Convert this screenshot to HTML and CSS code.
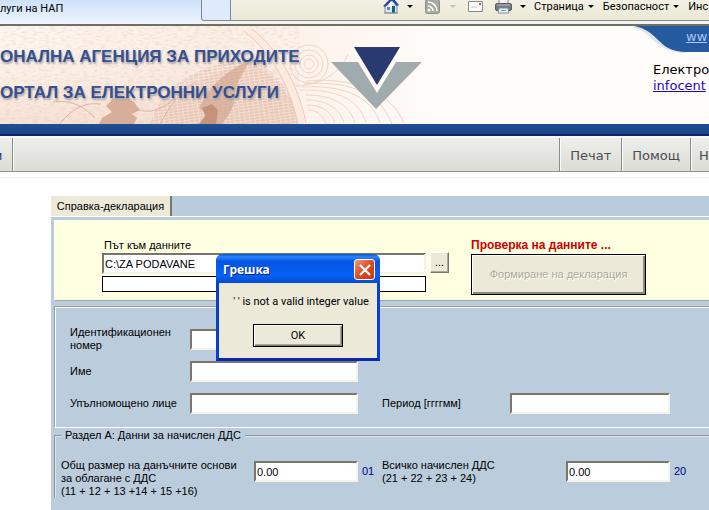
FILE: index.html
```html
<!DOCTYPE html>
<html lang="bg">
<head>
  <meta charset="utf-8">
  <title>Портал за електронни услуги на НАП</title>
  <link rel="stylesheet" href="styles.css">
</head>
<body>

<!-- Browser toolbar -->
<div class="toolbar">
  <div class="browser-tab">луги на НАП</div>
  <button class="new-tab" aria-label="Нов раздел"></button>
  <div class="commands">
    <button class="cmd cmd-home" aria-label="Начало">
      <svg width="18" height="16" viewBox="0 0 18 16">
        <path d="M3 6h12v8H3z" fill="#dbe8f5" stroke="#7c8fa8"/>
        <path d="M1 7 8 0l4 0 5 6-2 1-5-5-7 6z" fill="#2a44a8"/>
        <path d="M9 2 5 8h9z" fill="#eef5fb"/>
        <path d="M5 8h3v3H5z" fill="#6d86a8"/>
        <path d="M10 7h3v7h-3z" fill="#16647c"/>
        <path d="M2 14h14" stroke="#8a929c"/>
      </svg>
      <span class="arrow"></span>
    </button>
    <button class="cmd cmd-feed" aria-label="Емисии" disabled>
      <svg width="15" height="15" viewBox="0 0 15 15">
        <rect width="14" height="14" x=".5" y=".5" rx="2" fill="#a9a9a4" stroke="#8f8f8a"/>
        <circle cx="4" cy="11" r="1.5" fill="#fff"/>
        <path d="M3 7a5 5 0 0 1 5 5M3 3a9 9 0 0 1 9 9" fill="none" stroke="#fff" stroke-width="1.6"/>
      </svg>
      <span class="arrow arrow-off"></span>
    </button>
    <button class="cmd cmd-mail" aria-label="Поща">
      <svg width="15" height="12" viewBox="0 0 15 12">
        <path d="M.5.5h14v10H.5z" fill="#fbfbfb" stroke="#8a8a8a"/>
        <path d="M11 2h2v2h-2z" fill="#c4553c"/>
        <path d="M3 6h6" stroke="#c8c8cc"/>
      </svg>
    </button>
    <button class="cmd cmd-print" aria-label="Отпечатване">
      <svg width="17" height="15" viewBox="0 0 17 15">
        <path d="M4 0h9v5H4z" fill="#f4f4f4" stroke="#8b8b8b"/>
        <rect x=".5" y="4.5" width="16" height="7" rx="1.5" fill="#777b80" stroke="#595d62"/>
        <path d="M2 6h13" stroke="#b9bec4"/>
        <path d="M4 9h9l1 5H3z" fill="#eaf4f8" stroke="#7b8d96"/>
        <path d="M6 11.5h5" stroke="#49a8bd"/>
      </svg>
      <span class="arrow"></span>
    </button>
    <button class="cmd cmd-text">Страница <span class="arrow"></span></button>
    <button class="cmd cmd-text">Безопасност <span class="arrow"></span></button>
    <button class="cmd cmd-text">Инс</button>
  </div>
</div>

<!-- Site banner -->
<header class="banner">
  <svg class="banner-art" width="440" height="98" viewBox="0 0 440 98" aria-hidden="true">
    <defs>
      <linearGradient id="wash">
        <stop offset="0" stop-color="#fdf6f0"/>
        <stop offset=".5" stop-color="#fbeee5"/>
        <stop offset=".75" stop-color="#fdf4ee"/>
        <stop offset="1" stop-color="#fffcfa"/>
      </linearGradient>
      <linearGradient id="floor" x1="0" y1="0" x2="0" y2="1">
        <stop offset=".2" stop-color="#f3d9c8" stop-opacity="0"/>
        <stop offset="1" stop-color="#f0cfbc" stop-opacity=".5"/>
      </linearGradient>
      <pattern id="hatch" width="5" height="3" patternUnits="userSpaceOnUse" patternTransform="rotate(-8)">
        <path d="M0 1h4" stroke="#d3a48e" stroke-width=".7"/>
      </pattern>
      <filter id="grain" x="0" y="0" width="100%" height="100%">
        <feTurbulence type="fractalNoise" baseFrequency=".18 .5" numOctaves="2" seed="4"/>
        <feColorMatrix values="0 0 0 0 .75  0 0 0 0 .52  0 0 0 0 .4  1.8 0 0 0 -.8"/>
      </filter>
    </defs>
    <path d="M0 0h440v98H0z" fill="url(#wash)"/>
    <path d="M0 0h248c26 20 46 54 54 98H0z" fill="url(#floor)"/>
    <path d="M0 0h300v98H0z" filter="url(#grain)" opacity=".5"/>
    <path d="M165 98c8-28 30-46 84-62 26 14 44 34 52 62z" fill="#f2d8c9" opacity=".6"/>
    <path d="M150 98c10-36 40-56 98-68 28 14 46 38 54 68z" fill="url(#hatch)"/>
    <path d="M112 74l8-5 8 3 6 4 6 8-8 4 5 4-3 6H99l3-6 10-6-6-6z" fill="#cfa18c" opacity=".8"/>
    <path d="M250 34c-18 8-38 22-48 42l-3 6 8 6-7 10h22l6-8 6-12 2-18z" fill="#cfa08b" opacity=".6"/>
    <path d="M202 82l10-4 6 6-2 14h-17l6-8z" fill="#bb846c" opacity=".7"/>
    <path d="M60 98c10-14 24-22 40-20M135 82c12 6 24 4 40-10M160 98c12-22 22-34 36-42M95 92c-14-14-26-18-42-16M240 58c-14 8-20 22-18 40" fill="none" stroke="#ddb5a2"/>
    <path d="M248 4c26 20 46 54 54 94" fill="none" stroke="#fbeadd" stroke-width="7"/>
    <path d="M244 5c26 20 46 54 54 94M252 3c26 20 46 54 54 94" fill="none" stroke="#e9cbb9"/>
    <g fill="none" stroke="#f0d5c6">
      <circle cx="309" cy="38" r="5"/>
      <circle cx="309" cy="38" r="9"/>
      <circle cx="309" cy="38" r="14"/>
      <circle cx="309" cy="38" r="19"/>
      <path d="M296 60c24 0 46-14 52-32M300 64c30 0 56 4 66 32M302 61c36-2 68 6 78 36M305 69c26 0 44 8 50 28M306 74c20 0 34 8 38 23M307 79c14 0 24 6 28 18M308 84c8 0 14 4 18 14M304 58c42-4 76 8 88 40M306 55c48-4 84 10 98 42"/>
    </g>
  </svg>
  <div class="banner-title">
    <div>ОНАЛНА АГЕНЦИЯ ЗА ПРИХОДИТЕ</div>
    <div>ОРТАЛ ЗА ЕЛЕКТРОННИ УСЛУГИ</div>
  </div>
  <svg class="logo" width="92" height="62" viewBox="0 0 92 62" role="img" aria-label="НАП">
    <path d="M0 15h91L45 62z" fill="#9fabac"/>
    <path d="M17 0h57v15h-9L46 46 27 15z" fill="#fffaf6"/>
    <path d="M23 0h46L46 38z" fill="#283a70"/>
  </svg>
  <div class="contact">
    <div class="site-link">
      <svg class="wave" width="57" height="27" viewBox="0 0 57 27" aria-hidden="true">
        <path d="M0 1c12 1 18 7 25 14 8 7 17 12 32 12V0z" fill="#dfe3ea"/>
        <path d="M5 0c11 2 17 7 23 13 8 8 15 13 29 13V0z" fill="#265aa0"/>
      </svg>
      <a href="#">ww</a>
    </div>
    <div class="contact-text">
      Електро<br>
      <a href="#">infocent</a>
    </div>
  </div>
</header>
<div class="stripe"></div>

<nav class="menu">
  <a class="menu-first" href="#">и</a>
  <a href="#">Печат</a>
  <a href="#">Помощ</a>
  <a class="menu-last" href="#">Н</a>
</nav>

<!-- Declaration form -->
<main class="form-area">
  <div class="tabs">
    <button class="tab">Справка-декларация</button>
  </div>

  <form class="sheet">
    <section class="source">
      <div class="paths">
        <label for="path">Път към данните</label>
        <input class="field" id="path" type="text" value="C:\ZA PODAVANE">
        <input class="progress" type="text" aria-label="Файл" readonly>
      </div>
      <button class="browse" type="button">...</button>
      <div class="check">
        <strong>Проверка на данните ...</strong>
        <button class="generate" type="button" disabled>Формиране на декларация</button>
      </div>
    </section>

    <section class="person">
      <label for="ident">Идентификационен<br>номер</label>
      <input class="field" id="ident" type="text">
      <label class="col-name" for="name">Име</label>
      <input class="field" id="name" type="text">
      <label class="col-name" for="agent">Упълномощено лице</label>
      <input class="field" id="agent" type="text">
      <label class="col-period" for="period">Период [ггггмм]</label>
      <input class="field" id="period" type="text">
    </section>

    <fieldset class="section-a">
      <legend>Раздел А: Данни за начислен ДДС</legend>
      <div class="amounts">
        <label for="base">Общ размер на данъчните основи<br>за облагане с ДДС<br>(11 + 12 + 13 +14 + 15 +16)</label>
        <input class="field" id="base" type="text" value="0.00">
        <span class="cell-no">01</span>
        <label for="vat">Всичко начислен ДДС<br>(21 + 22 + 23 + 24)</label>
        <input class="field" id="vat" type="text" value="0.00">
        <span class="cell-no">20</span>
      </div>
    </fieldset>
  </form>
</main>

<!-- Error message -->
<div class="dialog" role="alertdialog" aria-labelledby="dialog-title">
  <div class="dialog-bar">
    <span id="dialog-title">Грешка</span>
    <button class="close" aria-label="Затвори">
      <svg width="12" height="12" viewBox="0 0 12 12"><path d="M1 1l10 10M11 1 1 11" stroke="#fff" stroke-width="2.2"/></svg>
    </button>
  </div>
  <div class="dialog-body">
    <p>' ' is not a valid integer value</p>
    <button class="ok">OK</button>
  </div>
</div>

</body>
</html>
```
FILE: styles.css
```css
* {
  box-sizing: border-box;
}

body {
  margin: 0;
  background: #fff;
  color: #000;
  font-family: "Liberation Sans", Arial, sans-serif;
  font-size: 11px;
  line-height: 13px;
  min-height: 100vh;
  position: relative;
  display: flex;
  flex-direction: column;
}

button,
input {
  font: inherit;
  color: inherit;
  margin: 0;
  padding: 0;
}

/* Browser toolbar */
.toolbar {
  display: flex;
  align-items: flex-start;
  height: 26px;
  background: #f2f2ee;
  border-bottom: 2px solid #6e7064;
  font-family: Roboto, Tahoma, sans-serif;
}

.browser-tab {
  width: 201px;
  height: 24px;
  padding-top: 2px;
  background: linear-gradient(#cfe1fa, #edf4fd);
}

.new-tab {
  width: 30px;
  height: 21px;
  border: 1px solid #7c8896;
  border-top: 0;
  border-radius: 0 0 0 3px;
  background: #dfeafa;
}

.commands {
  flex: 1;
  min-width: 0;
  height: 21px;
  display: flex;
  align-items: flex-start;
  padding-left: 151px;
  background: linear-gradient(#f3f1e4, #ebe8d6);
  border-bottom: 1px solid #85898c;
}

.cmd {
  flex: none;
  display: flex;
  align-items: center;
  height: 13px;
  border: 0;
  background: none;
  white-space: nowrap;
}

.cmd-home {
  width: 43px;
  gap: 7px;
}

.cmd-feed {
  width: 43px;
  gap: 10px;
}

.cmd-mail {
  width: 27px;
}

.cmd-print {
  width: 39px;
  gap: 8px;
}

.cmd-text {
  gap: 4px;
  margin-right: 9px;
}

.cmd-text:last-child {
  margin-right: 0;
}

.arrow {
  border: 3px solid transparent;
  border-top-color: #000;
  border-bottom: 0;
}

.arrow-off {
  border-top-color: #c4c2b4;
}

/* Banner */
.banner {
  position: relative;
  display: flex;
  align-items: flex-start;
  height: 98px;
  background: #fffcfa;
}

.banner-art {
  position: absolute;
  left: 0;
  top: 0;
}

.banner-title {
  position: relative;
  width: 331px;
  padding-top: 13px;
  color: #34508f;
  font-size: 17px;
  font-weight: bold;
  line-height: 36px;
  white-space: nowrap;
  text-shadow: 1px 2px 2px #a9a4a8;
}

.logo {
  position: relative;
  margin-top: 21px;
}

.contact {
  margin-left: auto;
  width: 80px;
  font-family: "DejaVu Sans", Verdana, sans-serif;
  font-size: 13px;
  line-height: 16px;
}

.site-link {
  display: flex;
  height: 26px;
  background: linear-gradient(90deg, #fffdfb 70%, #265aa0 70%);
}

.wave {
  flex: none;
}

.site-link a {
  padding-top: 3px;
  color: #a9c8f5;
}

.contact-text {
  padding: 10px 0 0 24px;
}

.contact-text a {
  color: #1a0ac8;
}

.stripe {
  height: 12px;
  background: linear-gradient(#1f4f94, #1c4488 80%, #0c2468 85%);
}

.menu {
  display: flex;
  height: 36px;
  border-top: 2px solid #f8f8f8;
  border-bottom: 1px solid #8f928d;
  background: linear-gradient(#eeeeec, #dcdcd4);
  font-family: "DejaVu Sans", Verdana, sans-serif;
  font-size: 13px;
  line-height: 35px;
}

.menu a {
  padding: 0 10px;
  color: #4c4c52;
  text-decoration: none;
  border-left: 1px solid #8b8b8b;
  box-shadow: inset 1px 0 #fafafa;
}

.menu .menu-first {
  width: 13px;
  padding: 0;
  margin-right: auto;
  border-left: 0;
  border-right: 1px solid #8b8b8b;
  box-shadow: 1px 0 #fafafa;
  text-indent: -6px;
  color: #34347c;
}

.menu .menu-last {
  width: 19px;
  padding: 0 0 0 8px;
}

/* Form */
.form-area {
  flex: 1;
  display: flex;
  flex-direction: column;
  margin-top: 5px;
  padding: 18px 0 0 51px;
  border-top: 1px solid #ececec;
}

.tabs {
  display: flex;
  height: 21px;
  background: #b9ccdc;
  border-bottom: 1px solid #fff;
}

.tab {
  width: 121px;
  border: 0;
  border-right: 2px solid #77776c;
  background: #ece9d8;
  white-space: nowrap;
}

.sheet {
  flex: 1;
  padding: 3px 0 0 3px;
  background: #bbccdc;
}

.source {
  display: flex;
  height: 81px;
  padding: 17px 0 0 47px;
  background: #ffffe1;
  border-left: 1px solid #fff;
  border-bottom: 1px solid #9aa6ac;
}

.paths {
  display: flex;
  flex-direction: column;
  width: 324px;
}

.paths label {
  padding: 2px 0 0 2px;
  height: 16px;
}

.field {
  height: 21px;
  padding-left: 1px;
  background: #fff;
  border: 2px solid;
  border-color: #77756c #f4f2ea #f4f2ea #77756c;
  border-radius: 0;
}

.progress {
  height: 16px;
  margin-top: 2px;
  background: #fff;
  border: 1px solid #000;
}

.browse {
  width: 19px;
  height: 21px;
  margin: 15px 22px 0 4px;
  background: #ece9d8;
  border: 1px solid;
  border-color: #fff #77756c #77756c #fff;
  box-shadow: inset -1px -1px #aca899;
}

.check {
  display: flex;
  flex-direction: column;
  width: 175px;
  padding-top: 2px;
}

.check strong {
  height: 15px;
  color: #d00000;
  font-size: 12px;
  white-space: nowrap;
}

.generate {
  height: 41px;
  background: #ece9d8;
  border: 1px solid #000;
  box-shadow: inset 1px 1px #fff, inset -2px -2px #8b887c;
  color: #aca899;
  text-shadow: 1px 1px #fff;
  white-space: nowrap;
}

.person {
  display: grid;
  grid-template-columns: 120px 168px 24px 128px 160px;
  grid-auto-rows: 32px;
  align-items: center;
  margin-top: 5px;
  padding: 16px 0 8px 15px;
  border: 1px solid #94a2a8;
  border-right: 0;
  border-bottom-color: #fff;
  box-shadow: inset 1px 1px #fff, 0 -1px #c6ccd0;
}

.person label,
.amounts label {
  white-space: nowrap;
}

.col-name {
  grid-column: 1;
}

.col-period {
  grid-column: 4;
}

.section-a {
  margin: 1px 0 0;
  padding: 0 0 0 5px;
  border: 2px groove #dce6ec;
  border-right: 0;
  border-bottom: 0;
}

.section-a legend {
  padding: 0 4px;
}

.amounts {
  display: grid;
  grid-template-columns: 193px 104px 24px 184px 104px 30px;
  align-items: start;
  padding-top: 17px;
}

.amounts .field {
  margin-top: 2px;
}

.cell-no {
  padding: 6px 0 0 4px;
  color: #00008b;
}

/* Error dialog */
.dialog {
  position: absolute;
  left: 216px;
  top: 254px;
  width: 164px;
  border: 3px solid #0a3fd4;
  border-top: 0;
  border-bottom-color: #0828b0;
  border-radius: 7px 7px 0 0;
  background: #ece9d8;
}

.dialog-bar {
  display: flex;
  align-items: center;
  justify-content: space-between;
  height: 29px;
  margin: 0 -3px;
  padding: 2px 5px 0 7px;
  border-radius: 7px 7px 0 0;
  background: linear-gradient(#0a50d8, #2a86fa 10%, #0654e4 25%, #0562f4 75%, #0448d0);
  color: #fff;
  font-family: "Noto Sans", "Trebuchet MS", sans-serif;
  font-size: 12px;
  font-weight: bold;
  text-shadow: 1px 1px #0a1f80;
}

.close {
  display: flex;
  align-items: center;
  justify-content: center;
  width: 21px;
  height: 21px;
  border: 1px solid #fff;
  border-radius: 3px;
  background: linear-gradient(135deg, #f0977c, #dc4c28 50%, #c03a14);
}

.dialog-body {
  display: flex;
  flex-direction: column;
  align-items: center;
  padding: 12px 0 11px;
  font-family: Roboto, Tahoma, sans-serif;
}

.dialog-body p {
  margin: 0 0 16px;
  padding-left: 6px;
  white-space: nowrap;
}

.ok {
  width: 90px;
  height: 23px;
  background: #ece9d8;
  border: 1px solid #000;
  box-shadow: inset 1px 1px #fff, inset -1px -1px #77756c, inset -2px -2px #aca899;
}
```
